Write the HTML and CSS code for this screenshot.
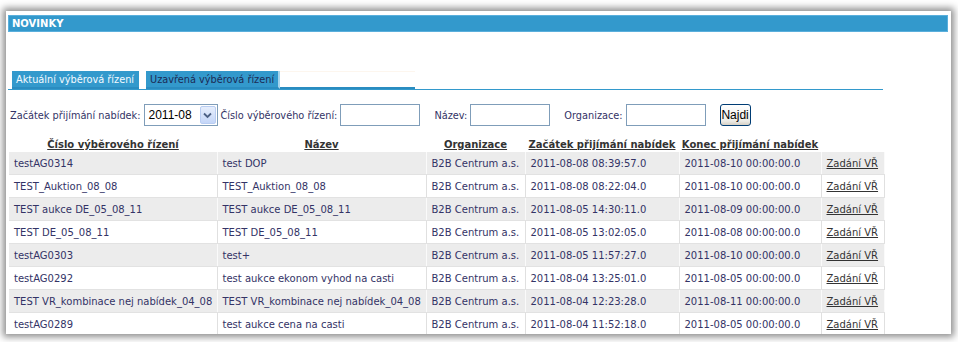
FILE: index.html
```html
<!DOCTYPE html>
<html lang="cs">
<head>
    <meta charset="UTF-8">
    <title>Novinky</title>
    <link rel="stylesheet" href="styles.css">
</head>
<body>
    <div class="panel">
        <div class="panel-title">NOVINKY</div>

        <div class="tabs">
            <span class="tab tab-active">Aktuální výběrová řízení</span>
            <span class="tab tab-closed">Uzavřená výběrová řízení</span>
            <span class="tab-rest"></span>
        </div>

        <form class="filter">
            <label>Začátek přijímání nabídek:</label>
            <div class="select">
                <span class="select-value">2011-08</span>
                <span class="select-arrow">
                    <svg width="9" height="7" viewBox="0 0 9 7"><path d="M1 1.5 L4.5 5 L8 1.5" fill="none" stroke="#4d6185" stroke-width="1.8"/></svg>
                </span>
            </div>
            <label class="gap-s">Číslo výběrového řízení:</label>
            <input type="text" class="field">
            <label class="gap-l">Název:</label>
            <input type="text" class="field">
            <label class="gap-l">Organizace:</label>
            <input type="text" class="field">
            <button type="button" class="btn">Najdi</button>
        </form>

        <table class="results">
            <colgroup>
                <col style="width:208px">
                <col style="width:209px">
                <col style="width:99px">
                <col style="width:154px">
                <col style="width:142px">
                <col style="width:63px">
            </colgroup>
            <thead>
                <tr>
                    <th>Číslo výběrového řízení</th>
                    <th>Název</th>
                    <th>Organizace</th>
                    <th>Začátek přijímání nabídek</th>
                    <th>Konec přijímání nabídek</th>
                    <th></th>
                </tr>
            </thead>
            <tbody id="rows"></tbody>
        </table>
    </div>

    <script>
        // data tabulky
        const rows = [
            ['testAG0314', 'test DOP', '2011-08-08 08:39:57.0', '2011-08-10 00:00:00.0'],
            ['TEST_Auktion_08_08', 'TEST_Auktion_08_08', '2011-08-08 08:22:04.0', '2011-08-10 00:00:00.0'],
            ['TEST aukce DE_05_08_11', 'TEST aukce DE_05_08_11', '2011-08-05 14:30:11.0', '2011-08-09 00:00:00.0'],
            ['TEST DE_05_08_11', 'TEST DE_05_08_11', '2011-08-05 13:02:05.0', '2011-08-08 00:00:00.0'],
            ['testAG0303', 'test+', '2011-08-05 11:57:27.0', '2011-08-10 00:00:00.0'],
            ['testAG0292', 'test aukce ekonom vyhod na casti', '2011-08-04 13:25:01.0', '2011-08-05 00:00:00.0'],
            ['TEST VR_kombinace nej nabídek_04_08', 'TEST VR_kombinace nej nabídek_04_08', '2011-08-04 12:23:28.0', '2011-08-11 00:00:00.0'],
            ['testAG0289', 'test aukce cena na casti', '2011-08-04 11:52:18.0', '2011-08-05 00:00:00.0']
        ];

        const tbody = document.getElementById('rows');
        rows.forEach((r, i) => {
            const tr = document.createElement('tr');
            tr.className = i % 2 === 0 ? 'odd' : 'even';
            tr.innerHTML =
                '<td>' + r[0] + '</td>' +
                '<td>' + r[1] + '</td>' +
                '<td>B2B Centrum a.s.</td>' +
                '<td>' + r[2] + '</td>' +
                '<td>' + r[3] + '</td>' +
                '<td><a href="#">Zadání VŘ</a></td>';
            tbody.appendChild(tr);
        });
    </script>
</body>
</html>
```

FILE: styles.css
```css
body {
    margin: 0;
    background: #fff;
    font-family: "DejaVu Sans", Verdana, sans-serif;
    font-size: 10px;
    color: #333366;
    height: 342px;
    overflow: hidden;
}

.panel {
    margin: 11px 0 0 6px;
    width: 945px;
    height: 323px;
    background: #fff;
    box-shadow: 0 0 7px 3px rgba(0, 0, 0, 0.45);
    padding: 4px 0 0 2px;
    box-sizing: border-box;
    overflow: hidden;
}

.panel-title {
    width: 940px;
    height: 17px;
    box-sizing: border-box;
    background: #3399cc;
    border: 1px solid #5aafdc;
    color: #fff;
    font-weight: bold;
    padding: 2px 0 0 3px;
}

/* zalozky */
.tabs {
    display: flex;
    align-items: flex-end;
    margin-top: 39px;
    width: 875px;
    height: 18px;
    border-bottom: 1px solid #3399cc;
}

.tab {
    height: 18px;
    box-sizing: border-box;
    padding: 3px 4px 0 4px;
    background: #3399cc;
    border-bottom: 2px solid #2a8cc0;
    white-space: nowrap;
    font-size: 9.75px;
}

.tab-active {
    margin-left: 4px;
    width: 127px;
    color: #f4faff;
}

.tab-closed {
    margin-left: 7px;
    width: 134px;
    color: #1c2b55;
    border-right: 2px solid #a6d4ec;
}

.tab-rest {
    width: 135px;
    height: 18px;
    box-sizing: border-box;
    border-top: 1px solid #fdf6ee;
    border-bottom: 2px solid #2a8cc0;
}

/* filtr */
.filter {
    display: flex;
    align-items: center;
    margin: 14px 0 0 2px;
    height: 22px;
    font-size: 9.75px;
}

.filter label {
    white-space: nowrap;
    margin-right: 3px;
}

.gap-s {
    margin-left: 3px;
}

.gap-l {
    margin-left: 14px;
}

.select {
    display: flex;
    align-items: center;
    width: 74px;
    height: 22px;
    box-sizing: border-box;
    border: 1px solid #7f9db9;
    background: #fff;
    padding: 1px;
}

.select-value {
    flex: 1;
    font-family: "Liberation Sans", Arial, sans-serif;
    font-size: 12px;
    color: #000;
    padding-left: 3px;
}

.select-arrow {
    display: flex;
    align-items: center;
    justify-content: center;
    width: 16px;
    height: 18px;
    box-sizing: border-box;
    border: 1px solid #b9cdf2;
    border-radius: 2px;
    background: linear-gradient(#e6eefc, #c4d6f8);
}

.field {
    width: 80px;
    height: 22px;
    box-sizing: border-box;
    border: 1px solid #7f9db9;
    margin: 0;
    padding: 0;
}

.btn {
    margin-left: 14px;
    width: 31px;
    height: 22px;
    padding: 0;
    box-sizing: border-box;
    border: 1px solid #003c74;
    border-radius: 3px;
    background: linear-gradient(#ffffff, #ecebe6 80%, #d6d0c5);
    font-family: "Liberation Sans", Arial, sans-serif;
    font-size: 12px;
    color: #000;
}

/* tabulka */
.results {
    margin: 11px 0 0 1px;
    border-collapse: collapse;
    table-layout: fixed;
    width: 875px;
}

.results th {
    height: 15px;
    padding: 0;
    font-weight: bold;
    color: #333;
    text-decoration: underline;
    text-align: center;
    white-space: nowrap;
    vertical-align: middle;
}

.results td {
    height: 22px;
    padding: 0 5px;
    white-space: nowrap;
    overflow: hidden;
    border-right: 1px solid #e0e0e0;
    border-bottom: 1px solid #e2e2e2;
}

.results tr.odd td {
    background: #ececec;
    border-right-color: #fafafa;
}

.results tr.even td {
    background: #fff;
}

.results a {
    color: #333;
}
```
